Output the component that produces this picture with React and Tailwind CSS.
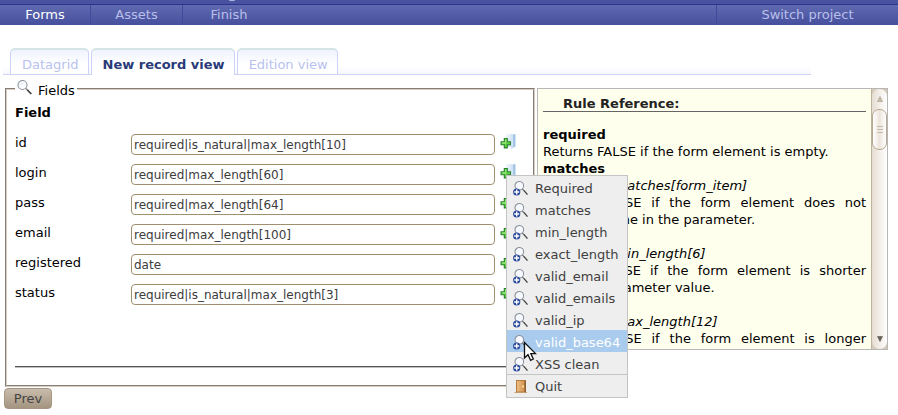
import React from 'react';

const FIELDS = [
  { name: 'id', rules: 'required|is_natural|max_length[10]' },
  { name: 'login', rules: 'required|max_length[60]' },
  { name: 'pass', rules: 'required|max_length[64]' },
  { name: 'email', rules: 'required|max_length[100]' },
  { name: 'registered', rules: 'date' },
  { name: 'status', rules: 'required|is_natural|max_length[3]' },
];

const RULES = [
  'Required',
  'matches',
  'min_length',
  'exact_length',
  'valid_email',
  'valid_emails',
  'valid_ip',
  'valid_base64',
  'XSS clean',
];

function Magnifier() {
  return (
    <svg width="16" height="16" viewBox="0 0 16 16" fill="none" aria-hidden="true">
      <circle cx="5.5" cy="5" r="4.5" fill="#fbfcff" stroke="#8d939c" strokeWidth="1.1" />
      <path d="M3.400 5.400A2.800 2.800 0 0 1 6 3" stroke="#dfe6f2" />
      <path d="M8.700 8.300l2.200 2.200" stroke="#777" strokeWidth="1.200" />
      <path d="M10.400 10l3.900 4" stroke="#3c3c3c" strokeWidth="1.700" />
    </svg>
  );
}

function MagnifierPlus() {
  return (
    <svg width="16" height="16" viewBox="0 0 16 16" fill="none" aria-hidden="true">
      <circle cx="6.300" cy="4.800" r="4.300" fill="#f6f9ff" stroke="#8d939c" strokeWidth="1.100" />
      <path d="M9.400 8l1.800 1.800" stroke="#777" strokeWidth="1.100" />
      <path d="M10.800 9.400l3.700 4.200" stroke="#444" strokeWidth="1.400" />
      <circle cx="3.700" cy="11" r="3.600" fill="#2b4a9b" />
      <path d="M3.700 8.500v5M1.200 11h5" stroke="#fff" strokeWidth="1.400" />
    </svg>
  );
}

function Door() {
  return (
    <svg width="16" height="16" viewBox="0 0 16 16" aria-hidden="true">
      <defs>
        <linearGradient id="door" x1="0" y1="0" x2="1" y2="0">
          <stop offset="0" stopColor="#edbb80" />
          <stop offset="1" stopColor="#d39350" />
        </linearGradient>
      </defs>
      <path d="M3 1h10v12.500H3z" fill="#b57a42" />
      <path d="M4 2h7.500v10.500H4z" fill="url(#door)" />
      <path d="M11.500 2H13v11.500h-1.500z" fill="#8f6134" />
      <path d="M1.500 13h12.500v1H1.500z" fill="#c49b6c" />
      <circle cx="10" cy="7.500" r="1" fill="#fff0b8" />
    </svg>
  );
}

function AddRule() {
  return (
    <svg width="17" height="17" viewBox="0 0 17 17" aria-hidden="true">
      <defs>
        <linearGradient id="pane" x1="0" y1="0" x2="1" y2="1">
          <stop offset="0" stopColor="#f3f8fc" />
          <stop offset="1" stopColor="#b4d2ec" />
        </linearGradient>
      </defs>
      <path d="M6 2h9v12l-3 1H6z" fill="url(#pane)" />
      <path d="M11 3.500L15.500 2v12.500L11 17z" fill="#a3c6e6" />
      <path d="M11 3.500L13 2.800V15.800L11 17z" fill="#d3e5f4" />
      <path
        d="M4.300 6.500h3v3.200h3.200v3H7.300v3.200h-3v-3.200H1.100v-3h3.200z"
        fill="#63d045"
        stroke="#27832a"
        strokeWidth="1.100"
      />
      <path d="M5.800 7.500v3M2 11h4" stroke="#aaf08d" />
    </svg>
  );
}

function Pointer() {
  return (
    <svg width="14" height="21" viewBox="0 0 14 21" aria-hidden="true">
      <path
        d="M1.500 1.500v15.500l3.500-3.300 2.600 5.600 2.700-1.300-2.500-5.400h4.700z"
        fill="#fff"
        stroke="#111"
        strokeWidth="1.300"
      />
    </svg>
  );
}

function RuleMenu() {
  return (
    <div
      role="menu"
      className="absolute left-[6px] top-[13px] z-10 w-[122px] border border-[#c4c4c4] bg-[#eeeeee]"
    >
      {RULES.map((rule) => {
        const active = rule === 'valid_base64';
        return (
          <button
            key={rule}
            type="button"
            role="menuitem"
            className={
              active
                ? 'relative flex h-[22px] w-full items-center gap-[6px] bg-[#a9cbee] pl-[6px] pt-[3px] text-white'
                : 'flex h-[22px] w-full items-center gap-[6px] pl-[6px] pt-[3px] text-[#3f3f3f]'
            }
          >
            <MagnifierPlus />
            <span className="whitespace-nowrap">{rule}</span>
            {active && (
              <span className="absolute left-[16px] top-[11px] z-20">
                <Pointer />
              </span>
            )}
          </button>
        );
      })}
      <button
        type="button"
        role="menuitem"
        className="flex h-[23px] w-full items-center gap-[6px] border-t border-[#c4c4c4] pl-[6px] pt-[2px] text-[#3f3f3f]"
      >
        <Door />
        <span>Quit</span>
      </button>
    </div>
  );
}

function NavBar() {
  return (
    <header>
      <div className="h-[4px] bg-[#48539f] pl-[229px]">
        <svg width="7" height="2" viewBox="0 0 7 2" aria-hidden="true">
          <path d="M0 0q3 1.500 6 0" stroke="#b9bfea" fill="none" />
        </svg>
      </div>
      <nav className="flex h-[21px] items-center border-t border-[#2b3591] bg-linear-to-b from-[#606ab0] to-[#454f9d]">
        <a
          href="#forms"
          className="flex h-full w-[91px] items-center justify-center border-r border-[#3f4a9c] text-white"
        >
          Forms
        </a>
        <a
          href="#assets"
          className="flex h-full w-[92px] items-center justify-center border-r border-[#3f4a9c] text-[#b9bfea]"
        >
          Assets
        </a>
        <a href="#finish" className="flex h-full w-[92px] items-center justify-center text-[#b9bfea]">
          Finish
        </a>
        <a
          href="#switch"
          className="ml-auto flex h-full w-[182px] items-center justify-center border-l border-[#3f4a9c] text-[#b9bfea]"
        >
          Switch project
        </a>
      </nav>
    </header>
  );
}

function Tabs() {
  const idle =
    'h-[26px] rounded-t-[5px] border border-b-0 border-t-2 border-[#ccd3fa] border-t-[#d3e5e4] bg-linear-to-b from-[#f0f3fe] to-white to-60% pl-[11px] pr-[9px] pt-[4px] text-left leading-[17px] text-[#b9c1ee]';
  return (
    <div
      role="tablist"
      className="ml-[3px] mr-[87px] mt-[23px] flex gap-[2px] border-b border-[#ccd3fa] bg-linear-to-t from-[#f7f7fe] to-white to-30% pl-[7px]"
    >
      <button type="button" role="tab" className={idle}>
        Datagrid
      </button>
      <button
        type="button"
        role="tab"
        aria-selected="true"
        className="-mb-px h-[27px] rounded-t-[5px] border border-b-0 border-t-2 border-[#ccd3fa] border-t-[#d3e5e4] bg-linear-to-b from-[#f0f3fe] to-white to-60% pb-px pl-[11px] pr-[9px] pt-[4px] text-left font-bold leading-[17px] text-[#293a78]"
      >
        New record view
      </button>
      <button type="button" role="tab" className={idle}>
        Edition view
      </button>
    </div>
  );
}

function FieldEditor() {
  return (
    <fieldset className="h-[307px] min-w-0 flex-1 border-2 border-[#d9cdc0] px-[8px] [border-style:groove]">
      <legend className="flex h-[18px] items-start gap-[5px] px-[2px]">
        <Magnifier />
        <span className="pt-[2px] leading-[17px]">Fields</span>
      </legend>
      <h2 className="mb-[13px] mt-[6px] font-bold leading-[17px]">Field</h2>
      {FIELDS.map((field) => (
        <div key={field.name} className="flex h-[30px] items-start">
          <label htmlFor={field.name} className="w-[116px] leading-[17px]">
            {field.name}
          </label>
          <input
            id={field.name}
            type="text"
            defaultValue={field.rules}
            className="h-[21px] min-w-0 flex-1 rounded-[4px] border border-[#a09070] bg-white px-[2px] text-[12px] text-[#3c3c3c] outline-none"
          />
          <div className="relative -mt-[2px] ml-[5px] mr-[8px]">
            <button type="button" aria-label={'Add rule to ' + field.name} className="block">
              <AddRule />
            </button>
            {field.name === 'login' && <RuleMenu />}
          </div>
        </div>
      ))}
      <hr className="mt-[52px] border-b border-t border-b-[#c0c0c0] border-t-[#555]" />
    </fieldset>
  );
}

function ScrollBar() {
  return (
    <div
      aria-hidden="true"
      className="flex w-[16px] shrink-0 flex-col border-l border-[#c0b29c] bg-[#d5cab9]"
    >
      <div className="flex h-[20px] items-center justify-center rounded-t-[8px] bg-linear-to-r from-[#e6ddd2] to-white">
        <svg width="6" height="6" viewBox="0 0 6 6">
          <path d="M3 .5L5.500 5.500h-5z" fill="#c6bcae" stroke="#a89b88" strokeWidth=".6" />
        </svg>
      </div>
      <div className="bg-linear-to-r from-[#e6ddd2] to-white">
        <div className="flex h-[41px] flex-col items-center justify-center gap-[2px] rounded-[7px] border border-[#b8a890] bg-linear-to-r from-white via-[#ede5dc] to-white">
          <span className="h-px w-[6px] bg-[#c6b9a5]" />
          <span className="h-px w-[6px] bg-[#c6b9a5]" />
          <span className="h-px w-[6px] bg-[#c6b9a5]" />
        </div>
      </div>
      <div className="flex flex-1 items-end justify-center rounded-b-[8px] bg-linear-to-r from-[#e6ddd2] to-white pb-[7px]">
        <svg width="6" height="6" viewBox="0 0 6 6">
          <path d="M.5.5h5L3 5.500z" fill="#6b6459" stroke="#5b544a" strokeWidth=".6" />
        </svg>
      </div>
    </div>
  );
}

function RuleReference() {
  return (
    <aside className="mt-[8px] flex h-[262px] w-[351px] overflow-hidden border border-[#b7b7b7] bg-[#ffffee]">
      <div className="min-w-0 flex-1 px-[5px] text-justify leading-[17px]">
        <h2 className="mb-[14px] mt-[7px] border-b border-[#666] pl-[20px] text-left font-bold leading-[15px] text-[#222]">
          Rule Reference:
        </h2>
        <h3 className="font-bold">required</h3>
        <p>Returns FALSE if the form element is empty.</p>
        <h3 className="font-bold">matches</h3>
        <p className="italic">Examples: matches[form_item]</p>
        <p>Returns FALSE if the form element does not match the one in the parameter.</p>
        <h3 className="font-bold">min_length</h3>
        <p className="italic">Examples: min_length[6]</p>
        <p>Returns FALSE if the form element is shorter than&nbsp;the parameter value.</p>
        <h3 className="font-bold">max_length</h3>
        <p className="italic">Examples: max_length[12]</p>
        <p className="[text-align-last:justify]">Returns FALSE if the form element is longer</p>
      </div>
      <ScrollBar />
    </aside>
  );
}

export default function App() {
  return (
    <div className="bg-white font-['DejaVu_Sans',sans-serif] text-[13px] text-black">
      <NavBar />
      <Tabs />
      <main className="ml-[5px] mr-[10px] mt-[5px]">
        <div className="flex items-start gap-[2px]">
          <FieldEditor />
          <RuleReference />
        </div>
      </main>
      <button
        type="button"
        className="ml-[4px] mt-px block h-[21px] w-[48px] rounded-[4px] border border-[#a59783] bg-linear-to-b from-[#c9bcab] to-[#a39580] leading-[17px] text-[#444]"
      >
        Prev
      </button>
    </div>
  );
}
